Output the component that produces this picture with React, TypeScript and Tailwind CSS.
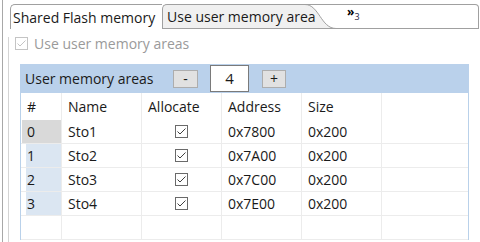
import React from "react";

const rows = [
  { id: 0, name: "Sto1", addr: "0x7800", size: "0x200" },
  { id: 1, name: "Sto2", addr: "0x7A00", size: "0x200" },
  { id: 2, name: "Sto3", addr: "0x7C00", size: "0x200" },
  { id: 3, name: "Sto4", addr: "0x7E00", size: "0x200" },
];

function Check({ disabled }: { disabled?: boolean }) {
  const c = disabled ? "#c4c4c4" : "#404040";
  return (
    <div
      className={
        "w-[13px] h-[13px] border bg-white flex items-center justify-center " +
        (disabled ? "border-[#c4c4c4]" : "border-[#6a6a6a]")
      }
    >
      <svg width="11" height="11" viewBox="0 0 11 11">
        <path d="M1.5 5.5 L4 8 L9.5 2.5" fill="none" stroke={c} strokeWidth="1" />
      </svg>
    </div>
  );
}

export default function App() {
  return (
    <div className="w-[480px] h-[242px] bg-white overflow-hidden text-[14px] text-[#1a1a1a] font-['Open_Sans',sans-serif]">
      <div className="ml-[2px] h-full border-l border-[#a8a8a8] pt-[4px]">
        {/* Tab strip */}
        <div className="flex h-[25px]">
          <div className="ml-[7px] w-[152px] border-l border-t border-[#a0a0a0] rounded-tl-[5px] bg-white pl-[2px] flex items-center">
            Shared Flash memory
          </div>
          <div className="w-[143px] border-l border-t border-b border-[#a0a0a0] rounded-tl-[5px] bg-[#f0f0f0] pl-[4px] flex items-center whitespace-nowrap">
            <span className="relative z-10">Use user memory area</span>
          </div>
          <svg width="36" height="25" viewBox="0 0 36 25" className="shrink-0">
            <path d="M0 0.5 C 14 0.5, 16 24.5, 31 24.5 L0 24.5 Z" fill="#f0f0f0" />
            <path d="M0 0.5 C 14 0.5, 16 24.5, 31 24.5" fill="none" stroke="#a0a0a0" />
            <path d="M0 0.5 H36" stroke="#a0a0a0" />
            <path d="M0 24.5 H36" stroke="#a0a0a0" />
          </svg>
          <div className="flex-1 mr-[1px] border-t border-b border-r border-[#a0a0a0] rounded-tr-[4px] flex items-start pl-[6px] pt-[1px] text-black">
            <span className="text-[12px] font-bold leading-none">»</span>
            <span className="text-[9px] leading-none mt-[6px] text-[#1a1a40]">3</span>
          </div>
        </div>

        {/* Content */}
        <div className="ml-[5px] h-full border-l border-[#d4d4d4]">
          <div className="ml-[6px] mt-[8px] h-[13px] flex items-center gap-[6px]">
            <Check disabled />
            <span className="text-[#9a9a9a]">Use user memory areas</span>
          </div>

          <div className="ml-[11px] mt-[14px] w-[449px]">
            <div className="h-[29px] bg-[#bad1eb] flex items-center pl-[5px]">
              <span className="w-[148px]">User memory areas</span>
              <div className="w-[25px] h-[18px] bg-[#e1e1e1] border border-[#adadad] flex items-center justify-center text-[14px]">
                -
              </div>
              <div className="ml-[12px] w-[39px] h-[27px] bg-white border border-[#7a7a7a] flex items-center justify-center text-[15px]">
                4
              </div>
              <div className="ml-[13px] w-[24px] h-[18px] bg-[#e1e1e1] border border-[#adadad] flex items-center justify-center text-[14px]">
                +
              </div>
            </div>

            <div className="border-x border-[#b9d1ea] grid grid-cols-[41px_80px_80px_80px_80px_1fr]">
              {["#", "Name", "Allocate", "Address", "Size", ""].map((h, i) => (
                <div
                  key={i}
                  className={
                    "h-[27px] flex items-center pl-[6px] " +
                    (i < 5 ? "border-r border-[#ececec]" : "")
                  }
                >
                  {h}
                </div>
              ))}
              {rows.map((r) => (
                <React.Fragment key={r.id}>
                  <div className="h-[24px] border-r border-b border-[#ececec] flex">
                    <div
                      className={
                        "flex-1 flex items-center " +
                        (r.id === 0
                          ? "ml-[1px] bg-[#d9d9d9] pl-[5px]"
                          : "ml-[5px] bg-[#dbe6f2] pl-[1px]")
                      }
                    >
                      {r.id}
                    </div>
                  </div>
                  <div className="h-[24px] border-r border-b border-[#ececec] flex items-center pl-[6px]">
                    {r.name}
                  </div>
                  <div className="h-[24px] border-r border-b border-[#ececec] flex items-center justify-center">
                    <Check />
                  </div>
                  <div className="h-[24px] border-r border-b border-[#ececec] flex items-center pl-[6px]">
                    {r.addr}
                  </div>
                  <div className="h-[24px] border-r border-b border-[#ececec] flex items-center pl-[6px]">
                    {r.size}
                  </div>
                  <div className="h-[24px] border-b border-[#ececec]" />
                </React.Fragment>
              ))}
              {[0, 1, 2, 3, 4, 5].map((i) => (
                <div
                  key={"e" + i}
                  className={
                    "h-[24px] border-b border-[#ececec] " + (i < 5 ? "border-r" : "")
                  }
                />
              ))}
            </div>
          </div>
        </div>
      </div>
    </div>
  );
}
